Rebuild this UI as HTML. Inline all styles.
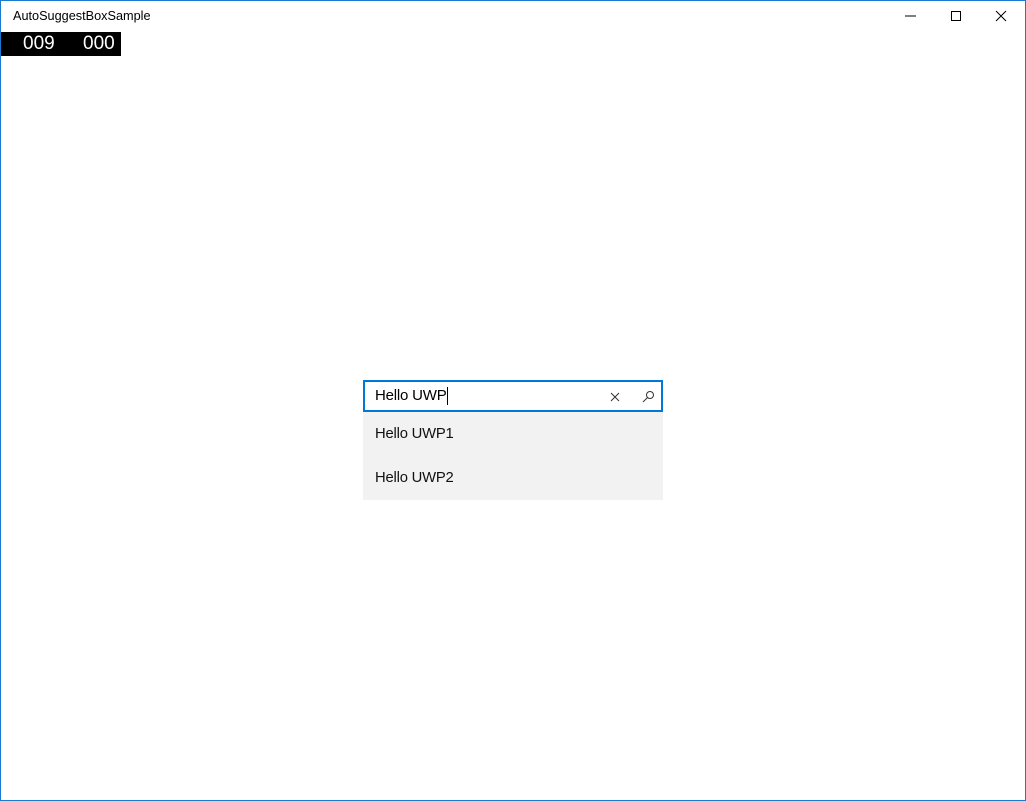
<!DOCTYPE html>
<html><head><style>
body{margin:0;width:1026px;height:801px;overflow:hidden;font-family:"Liberation Sans",sans-serif;}
.win{position:absolute;left:0;top:0;width:1024px;height:799px;border:1px solid #1a7ad0;background:#fff;}
.t{position:absolute;font-size:12px;color:#000;}
</style></head><body>
<div class="win"></div>
<div class="t" style="left:13px;top:9px;font-size:12.7px">AutoSuggestBoxSample</div>
<svg style="position:absolute;left:900px;top:8px" width="110" height="16">
<line x1="5" y1="8" x2="16" y2="8" stroke="#000"/>
<rect x="51.5" y="3.5" width="9" height="9" fill="none" stroke="#000"/>
<path d="M96 3L106 13M106 3L96 13" stroke="#000"/>
</svg>
<div style="position:absolute;left:1px;top:32px;width:120px;height:24px;background:#000;color:#fff;font-size:19px;line-height:24px;">
<span style="position:absolute;left:22px">009</span><span style="position:absolute;left:82px">000</span></div>
<div style="position:absolute;left:363px;top:380px;width:296px;height:28px;border:2px solid #0078d7;background:#fff;"></div>
<div class="t" style="left:375px;top:387px;font-size:15px;color:#000;letter-spacing:-0.2px">Hello UWP</div>
<div style="position:absolute;left:447px;top:387px;width:1px;height:18px;background:#000"></div>
<svg style="position:absolute;left:605px;top:389px" width="50" height="16">
<path d="M6 4L14 12M14 4L6 12" stroke="#333" stroke-width="1"/>
<circle cx="45" cy="6" r="3.5" fill="none" stroke="#333"/>
<line x1="42.5" y1="8.5" x2="38" y2="13" stroke="#333"/>
</svg>
<div style="position:absolute;left:363px;top:412px;width:300px;height:88px;background:#f2f2f2;"></div>
<div class="t" style="left:375px;top:426px;font-size:14.8px;color:#111;letter-spacing:-0.2px">Hello UWP1</div>
<div class="t" style="left:375px;top:470px;font-size:14.8px;color:#111;letter-spacing:-0.2px">Hello UWP2</div>
</body></html>
